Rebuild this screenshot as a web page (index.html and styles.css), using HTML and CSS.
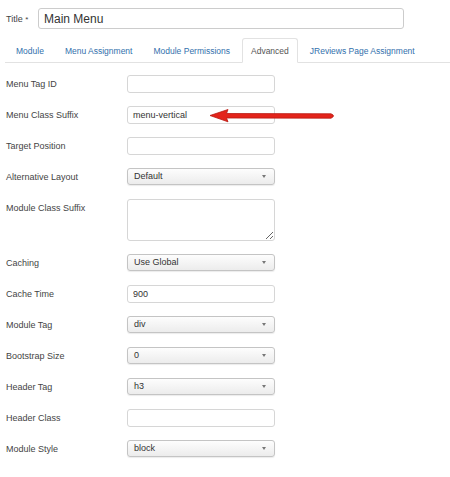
FILE: index.html
```html
<!DOCTYPE html>
<html>
<head>
  <title>Module Advanced</title>
  <link rel="stylesheet" href="styles.css">
</head>
<body>
  <div class="page">
    <div class="title-row">
      <label class="title-label">Title <span class="star">*</span></label>
      <input class="title-input" type="text" value="Main Menu">
    </div>

    <!-- tabs -->
    <ul class="tabs">
      <li><a>Module</a></li>
      <li><a>Menu Assignment</a></li>
      <li><a>Module Permissions</a></li>
      <li class="active"><a>Advanced</a></li>
      <li><a>JReviews Page Assignment</a></li>
    </ul>

    <div class="form">
      <div class="row">
        <label>Menu Tag ID</label>
        <input class="field" type="text" value="">
      </div>
      <div class="row">
        <label>Menu Class Suffix</label>
        <input class="field" type="text" value="menu-vertical">
      </div>
      <div class="row">
        <label>Target Position</label>
        <input class="field" type="text" value="">
      </div>
      <div class="row">
        <label>Alternative Layout</label>
        <div class="select">Default</div>
      </div>
      <div class="row">
        <label>Module Class Suffix</label>
        <textarea class="field area"></textarea>
      </div>
      <div class="row">
        <label>Caching</label>
        <div class="select">Use Global</div>
      </div>
      <div class="row">
        <label>Cache Time</label>
        <input class="field" type="text" value="900">
      </div>
      <div class="row">
        <label>Module Tag</label>
        <div class="select">div</div>
      </div>
      <div class="row">
        <label>Bootstrap Size</label>
        <div class="select">0</div>
      </div>
      <div class="row">
        <label>Header Tag</label>
        <div class="select">h3</div>
      </div>
      <div class="row">
        <label>Header Class</label>
        <input class="field" type="text" value="">
      </div>
      <div class="row">
        <label>Module Style</label>
        <div class="select">block</div>
      </div>
    </div>

    <!-- annotation arrow -->
    <svg class="arrow" width="130" height="16" viewBox="0 0 130 16">
      <path d="M2 7.5 L20 1.5 L18.5 5.5 L123 5.8 Q128 7.8 123 10.2 L18.5 10 L20 13.8 Z" fill="#e3241b" stroke="#b81810" stroke-width="0.8" stroke-linejoin="round"/>
    </svg>
  </div>
</body>
</html>
```

FILE: styles.css
```css
body {
  margin: 0;
  background-color: #fff;
  font-family: "Liberation Sans", Arial, sans-serif;
  color: #333;
}

.page {
  position: relative;
  padding: 8px 0 0 6px;
}

.title-row {
  display: flex;
  align-items: center;
  height: 21px;
}

.title-label {
  width: 32px;
  font-size: 9px;
  color: #444;
}

.star {
  font-size: 8px;
}

.title-input {
  box-sizing: border-box;
  width: 366px;
  height: 21px;
  margin: 0;
  padding: 0 5px;
  border: 1px solid #ccc;
  border-radius: 3px;
  font-family: "Liberation Sans", Arial, sans-serif;
  font-size: 12px;
  color: #333;
}

.tabs {
  display: flex;
  gap: 3px;
  list-style: none;
  margin: 9px 0 0 -1px;
  padding: 0 0 0 2px;
  border-bottom: 1px solid #e2e2e2;
}

.tabs li {
  margin-bottom: -1px;
}

.tabs a {
  display: block;
  box-sizing: border-box;
  height: 25px;
  line-height: 24px;
  padding: 0 8px;
  font-size: 8.5px;
  color: #3270ac;
  border: 1px solid transparent;
  border-radius: 3px 3px 0 0;
}

.tabs .active a {
  color: #555;
  background-color: #fff;
  border-color: #e2e2e2 #e2e2e2 #fff;
}

.form {
  padding-top: 12px;
}

.row {
  display: flex;
  align-items: flex-start;
  margin-bottom: 13px;
}

.row label {
  width: 121px;
  line-height: 18px;
  font-size: 9px;
  color: #444;
}

.field {
  box-sizing: border-box;
  width: 148px;
  height: 18px;
  margin: 0;
  padding: 0 5px;
  border: 1px solid #d6d6d6;
  border-radius: 3px;
  font-family: "Liberation Sans", Arial, sans-serif;
  font-size: 9px;
  color: #333;
  background-color: #fff;
}

.area {
  height: 42px;
  resize: vertical;
}

.select {
  position: relative;
  box-sizing: border-box;
  width: 148px;
  height: 17px;
  line-height: 15px;
  padding: 0 6px;
  border: 1px solid #c4c4c4;
  border-radius: 3px;
  font-size: 9px;
  color: #333;
  background: linear-gradient(#fdfdfd, #ececec);
  box-shadow: 0 1px 1px rgba(0, 0, 0, 0.08);
}

.select::after {
  content: "";
  position: absolute;
  right: 8px;
  top: 6px;
  border-left: 2.5px solid transparent;
  border-right: 2.5px solid transparent;
  border-top: 3px solid #777;
}

.arrow {
  position: absolute;
  left: 208px;
  top: 108px;
}
```
